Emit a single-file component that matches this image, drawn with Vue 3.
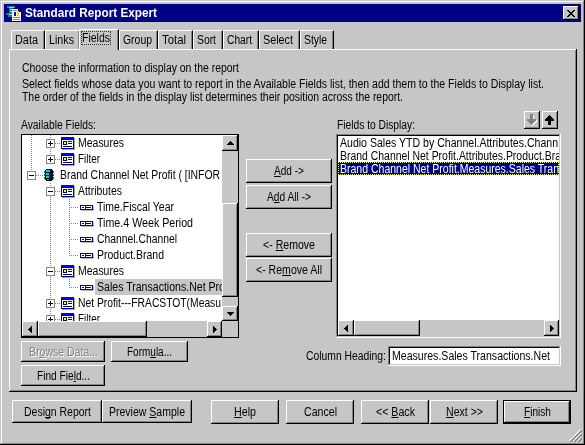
<script setup>
import { h, ref, onMounted, defineComponent } from 'vue'

// Text with an "&" access key marker, condensed to a given width.
const Caption = defineComponent({
  props: { text: String, width: Number },
  setup(props) {
    const el = ref(null)
    onMounted(() => {
      const natural = el.value.getBoundingClientRect().width
      el.value.style.transform = `scaleX(${props.width / natural})`
      el.value.style.marginRight = props.width - natural + 'px'
    })
    return () => {
      const i = props.text.indexOf('&')
      const body = i < 0
        ? props.text
        : [props.text.slice(0, i), h('u', props.text[i + 1]), props.text.slice(i + 2)]
      return h('span', { ref: el, class: 'caption' }, body)
    }
  }
})

const tabs = [
  { t: 'Data', w: 23, c: 'w34' },
  { t: 'Links', w: 25, c: 'w35' },
  { t: 'Fields', w: 28, c: 'active' },
  { t: 'Group', w: 29, c: 'w39' },
  { t: 'Total', w: 24, c: 'w35' },
  { t: 'Sort', w: 19, c: 'w30' },
  { t: 'Chart', w: 25, c: 'w36' },
  { t: 'Select', w: 30, c: 'w41' },
  { t: 'Style', w: 23, c: 'w34' }
]

// kind: folder | db | leaf ; lines: svg path of the dotted guides
const rows = [
  { kind: 'folder', t: 'Measures', w: 46, box: '+', lines: 'M9.5 0V16M28.5 0V16M33 8.5H39' },
  { kind: 'folder', t: 'Filter', w: 22, box: '+', lines: 'M9.5 0V16M28.5 0V8M33 8.5H39' },
  { kind: 'db', t: 'Brand Channel Net Profit ( [INFOR', w: 160, box: '-', lines: 'M9.5 0V8M14 8.5H21' },
  { kind: 'folder', t: 'Attributes', w: 44, box: '-', lines: 'M28.5 0V16M33 8.5H39' },
  { kind: 'leaf', t: 'Time.Fiscal Year', w: 77, lines: 'M28.5 0V16M47.5 0V16M47 8.5H57' },
  { kind: 'leaf', t: 'Time.4 Week Period', w: 96, lines: 'M28.5 0V16M47.5 0V16M47 8.5H57' },
  { kind: 'leaf', t: 'Channel.Channel', w: 80, lines: 'M28.5 0V16M47.5 0V16M47 8.5H57' },
  { kind: 'leaf', t: 'Product.Brand', w: 67, lines: 'M28.5 0V16M47.5 0V8M47 8.5H57' },
  { kind: 'folder', t: 'Measures', w: 46, box: '-', lines: 'M28.5 0V16M33 8.5H39' },
  { kind: 'leaf', t: 'Sales Transactions.Net Pro', w: 128, sel: true, lines: 'M28.5 0V16M47.5 0V8M47 8.5H57' },
  { kind: 'folder', t: 'Net Profit---FRACSTOT(Measu', w: 143, box: '+', lines: 'M28.5 0V16M33 8.5H39' },
  { kind: 'folder', t: 'Filter', w: 22, box: '+', lines: 'M28.5 0V16M33 8.5H39' }
]
const gutter = { folder: 54, db: 36, leaf: 73 }

const display = [
  { t: 'Audio Sales YTD by Channel.Attributes.Chann', w: 218 },
  { t: 'Brand Channel Net Profit.Attributes.Product.Bra', w: 221 },
  { t: 'Brand Channel Net Profit.Measures.Sales Tran', w: 219, sel: true }
]
</script>

<template>
  <div class="window">
    <header class="titlebar">
      <svg class="app-icon" width="16" height="17" shape-rendering="crispEdges">
        <path d="M1 1H9V3H7V8H11V12H2V10H0V8H3V3H1Z" fill="#008484" />
        <path d="M3 2H8M4 4H8M4 6H8M3 9H8" stroke="#8ce0e0" transform="translate(0 .5)" />
        <path d="M6 4H14L16 6V17H6Z" fill="#111" />
        <path d="M6 4H12V7H15V16H6Z" fill="#fff" />
        <path d="M8 7h2v4H8z" fill="#0000c6" />
        <path d="M11 6h2v5h-2z" fill="#e7df00" />
        <path d="M7 5.5H11M7 12.5H14M7 14.5H14" stroke="#848484" />
      </svg>
      <Caption class="title" text="Standard Report Expert" :width="132" />
      <button class="btn close" aria-label="Close">
        <svg width="8" height="7" shape-rendering="crispEdges">
          <path d="M0 0h2v1h1v1h2V1h1V0h2v1H7v1H6v1H5v1h1v1h1v1h1v1H6V6H5V5H3v1H2v1H0V6h1V5h1V4h1V3H2V2H1V1H0z" />
        </svg>
      </button>
    </header>

    <nav class="tabs">
      <div v-for="tab in tabs" :key="tab.t" class="tab" :class="tab.c">
        <span class="tab-label"><Caption :text="tab.t" :width="tab.w" /></span>
      </div>
    </nav>

    <main class="page">
      <p class="lead"><Caption text="Choose the information to display on the report" :width="217" /></p>
      <p><Caption text="Select fields whose data you want to report in the Available Fields list, then add them to the Fields to Display list." :width="522" /></p>
      <p><Caption text="The order of the fields in the display list determines their position across the report." :width="381" /></p>

      <div class="columns">
        <section class="available">
          <div class="heading"><Caption text="Available Fields:" :width="75" /></div>
          <div class="tree">
            <div class="rows">
              <div v-for="(r, i) in rows" :key="i" class="row">
                <svg :width="gutter[r.kind]" height="16" shape-rendering="crispEdges">
                  <path :d="r.lines" stroke="#848484" stroke-dasharray="1 1" fill="none" />
                  <g v-if="r.box" :transform="r.kind === 'db' ? 'translate(5 4)' : 'translate(24 4)'">
                    <rect x=".5" y=".5" width="8" height="8" fill="#fff" stroke="#848484" />
                    <path :d="r.box === '+' ? 'M2 4.5H7M4.5 2V7' : 'M2 4.5H7'" stroke="#000" />
                  </g>
                  <g v-if="r.kind === 'folder'" transform="translate(39 2)">
                    <path d="M1 1H14V13H1Z" fill="#a5a5a5" />
                    <path d="M0 0H13V12H0Z" fill="#000084" />
                    <path d="M0 0H13V2H0Z" fill="#0000ff" />
                    <path d="M1 3H12V11H1Z" fill="#fff" />
                    <path d="M2 4H6V8H2Z" fill="#000084" />
                    <path d="M3 5H5V7H3Z" fill="#ffff00" />
                    <path d="M7 4.5H11M7 6.5H11M2 9.5H11" stroke="#000084" />
                  </g>
                  <g v-else-if="r.kind === 'db'" transform="translate(22 2)">
                    <path d="M2 0H8V1H9V11H8V12H2V11H1V1H2Z" fill="#000" />
                    <path d="M2 1H6V3H2ZM2 4H5V6H2ZM2 7H5V9H2ZM3 10H5V11H3Z" fill="#00d6d6" />
                    <path d="M6 1H8V2H6ZM5 4H8V6H5ZM5 7H8V9H5ZM5 10H8V11H5Z" fill="#000084" />
                    <path d="M0 2H1V4H0ZM0 5H1V7H0ZM0 8H1V10H0ZM9 2H10V4H9ZM9 5H10V7H9ZM9 8H10V10H9Z" fill="#008484" />
                  </g>
                  <g v-else-if="r.kind === 'leaf'" transform="translate(58 6)">
                    <path d="M1 1H14V6H1Z" fill="#b5b5b5" />
                    <rect x=".5" y=".5" width="12" height="4" fill="#fff" stroke="#000094" />
                    <path d="M2 2.5H4M6 2.5H11M5.5 1V4" stroke="#000094" />
                  </g>
                </svg>
                <span class="label" :class="{ selected: r.sel }"><Caption :text="r.t" :width="r.w" /></span>
              </div>
            </div>
            <div class="vbar">
              <div class="btn arrow"><svg width="7" height="4" shape-rendering="crispEdges"><path d="M3 0h1v1h1v1h1v1h1v1H0V3h1V2h1V1h1z" /></svg></div>
              <div class="btn thumb"></div>
              <div class="btn arrow down"><svg width="7" height="4" shape-rendering="crispEdges"><path d="M0 0h7v1H6v1H5v1H4v1H3V3H2V2H1V1H0z" /></svg></div>
            </div>
            <div class="hbar">
              <div class="btn arrow"><svg width="4" height="7" shape-rendering="crispEdges"><path d="M3 0h1v7H3V6H2V5H1V4H0V3h1V2h1V1h1z" /></svg></div>
              <div class="btn thumb"></div>
              <div class="btn arrow right"><svg width="4" height="7" shape-rendering="crispEdges"><path d="M0 0h1v1h1v1h1v1h1v1H3v1H2v1H1v1H0z" /></svg></div>
            </div>
          </div>
          <div class="actions">
            <button class="btn b84 disabled"><Caption text="Br&owse Data..." :width="69" /></button>
            <button class="btn b77"><Caption text="Form&ula..." :width="45" /></button>
            <button class="btn b84"><Caption text="Find Fie&ld..." :width="53" /></button>
          </div>
        </section>

        <section class="transfer">
          <button class="btn"><Caption text="&Add ->" :width="30" /></button>
          <button class="btn"><Caption text="A&dd All ->" :width="44" /></button>
          <button class="btn remove"><Caption text="<- &Remove" :width="52" /></button>
          <button class="btn remove-all"><Caption text="<- Re&move All" :width="66" /></button>
        </section>

        <section class="chosen">
          <div class="chosen-head">
            <Caption text="Fields to Display:" :width="78" />
            <div class="movers">
              <button class="btn" aria-label="Down">
                <svg width="12" height="12" shape-rendering="crispEdges">
                  <path d="M5 1H8V6H11V8H10V9H9V10H8V11H7V12H6V11H5V6Z" fill="#fff" />
                  <path d="M4 0H7V5H10V7H9V8H8V9H7V10H6V11H5V10H4V9H3V8H2V7H1V5H4Z" fill="#848484" />
                </svg>
              </button>
              <button class="btn" aria-label="Up">
                <svg width="12" height="12" shape-rendering="crispEdges">
                  <path d="M5 1H6V2H7V3H8V4H9V5H10V7H7V11H4V7H1V5H2V4H3V3H4V2H5Z" fill="#000" />
                </svg>
              </button>
            </div>
          </div>
          <div class="list sunken">
            <div class="items">
              <div v-for="d in display" :key="d.t" class="item" :class="{ current: d.sel }">
                <Caption :text="d.t" :width="d.w" />
              </div>
            </div>
            <div class="hbar">
              <div class="btn arrow"><svg width="4" height="7" shape-rendering="crispEdges"><path d="M3 0h1v7H3V6H2V5H1V4H0V3h1V2h1V1h1z" /></svg></div>
              <div class="btn thumb"></div>
              <div class="btn arrow right"><svg width="4" height="7" shape-rendering="crispEdges"><path d="M0 0h1v1h1v1h1v1h1v1H3v1H2v1H1v1H0z" /></svg></div>
            </div>
          </div>
          <div class="column-heading">
            <Caption text="Column Heading:" :width="80" />
            <div class="field sunken"><Caption text="Measures.Sales Transactions.Net" :width="158" /></div>
          </div>
        </section>
      </div>
    </main>

    <footer class="footer">
      <button class="btn wide"><Caption text="Desi&gn Report" :width="67" /></button>
      <button class="btn wide"><Caption text="Preview &Sample" :width="76" /></button>
      <button class="btn help"><Caption text="&Help" :width="22" /></button>
      <button class="btn cancel"><Caption text="Cancel" :width="33" /></button>
      <button class="btn back"><Caption text="<< &Back" :width="39" /></button>
      <button class="btn next"><Caption text="&Next >>" :width="37" /></button>
      <button class="btn finish"><Caption text="&Finish" :width="27" /></button>
    </footer>
    <svg class="grip" width="13" height="13">
      <path d="M0 12L12 0M4 12L12 4M8 12L12 8" stroke="#fff" />
      <path d="M1 13L13 1M2 13L13 2M5 13L13 5M6 13L13 6M9 13L13 9M10 13L13 10" stroke="#848484" stroke-width=".9" />
    </svg>
  </div>
</template>

<style>
body {
  margin: 0;
  background: #c6c6c6;
}
</style>

<style scoped>
.window {
  position: relative;
  box-sizing: border-box;
  width: 585px;
  height: 445px;
  padding: 4px 3px 3px 4px;
  overflow: hidden;
  background: #c6c6c6;
  box-shadow: inset -1px -1px #000, inset 1px 1px #c6c6c6, inset -2px -2px #848484, inset 2px 2px #fff;
  color: #000;
  font: 12px/14px "Liberation Sans", Arial, sans-serif;
}
.caption {
  display: inline-block;
  flex: none;
  transform-origin: 0 50%;
  white-space: pre;
}
.caption :deep(u) {
  text-underline-offset: 1px;
  text-decoration-thickness: 1px;
  text-decoration-skip-ink: none;
}
.btn {
  display: flex;
  align-items: center;
  justify-content: center;
  box-sizing: border-box;
  flex: none;
  margin: 0;
  padding: 0;
  border: 0;
  background: #c6c6c6;
  box-shadow: inset -1px -1px #000, inset 1px 1px #fff, inset -2px -2px #848484;
  color: #000;
  font: inherit;
}
.sunken {
  box-sizing: border-box;
  padding: 2px;
  background: #fff;
  box-shadow: inset -1px -1px #fff, inset 1px 1px #848484, inset -2px -2px #c6c6c6, inset 2px 2px #000;
}
.titlebar {
  display: flex;
  align-items: center;
  width: 577px;
  height: 18px;
  background: #000084;
}
.app-icon {
  margin: 0 2px;
  flex: none;
}
.title {
  margin-left: 1px;
  color: #fff;
  font-weight: bold;
}
.close {
  width: 16px;
  height: 14px;
  margin: 0 2px 0 auto;
}
.tabs {
  display: flex;
  align-items: flex-end;
  height: 20px;
  margin: 7px 0 0 7px;
}
.tab {
  box-sizing: border-box;
  height: 19px;
  border-top: 1px solid #fff;
  border-left: 1px solid #fff;
  border-right: 1px solid #000;
  border-radius: 2px 1px 0 0;
  box-shadow: inset -1px 0 #848484;
  padding: 2px 0 0 3px;
}
.w34 { width: 34px; }
.w35 { width: 35px; }
.w39 { width: 39px; }
.w30 { width: 30px; }
.w36 { width: 36px; }
.w41 { width: 41px; }
.active {
  position: relative;
  z-index: 1;
  width: 40px;
  height: 21px;
  margin: 0 0 -1px -1px;
  padding: 1px 0 0 1px;
  background: #c6c6c6;
}
.tab-label {
  display: block;
  height: 14px;
}
.active .tab-label {
  box-sizing: border-box;
  width: 30px;
  padding-left: 1px;
  outline: 1px dotted #333;
  outline-offset: -1px;
}
.page {
  box-sizing: border-box;
  width: 568px;
  height: 343px;
  margin-left: 5px;
  padding: 12px 0 0 13px;
  box-shadow: inset -1px -1px #000, inset 1px 1px #fff, inset -2px -2px #848484;
}
.page p {
  height: 13px;
  margin: 0;
}
.page .lead {
  height: 16px;
}
.columns {
  display: flex;
  margin: 8px 0 0 -1px;
}
.available {
  width: 218px;
  margin-top: 7px;
}
.heading {
  height: 16px;
}
.tree {
  display: grid;
  box-sizing: border-box;
  grid-template: 186px 16px / 200px 16px;
  width: 218px;
  height: 204px;
  border: 1px solid #000;
  background: #c6c6c6;
}
.rows {
  overflow: hidden;
  background: #fff;
}
.row {
  display: flex;
  height: 16px;
}
.row svg {
  flex: none;
}
.label {
  flex: 1;
  min-width: 0;
  padding: 1px 0 1px 2px;
  height: 14px;
  overflow: hidden;
}
.label.selected {
  background: #c6c6c6;
}
.vbar {
  display: flex;
  flex-direction: column;
}
.hbar {
  display: flex;
  height: 16px;
  background: #c6c6c6;
}
.arrow {
  width: 16px;
  height: 16px;
}
.vbar .down {
  height: 15px;
  margin-top: auto;
}
.vbar .thumb {
  height: 94px;
  margin-top: 52px;
}
.hbar .right {
  width: 15px;
  margin-left: auto;
}
.hbar .thumb {
  width: 109px;
}
.actions {
  display: flex;
  flex-wrap: wrap;
  gap: 3px 6px;
  margin-top: 3px;
}
.actions .btn {
  height: 21px;
}
.b84 { width: 84px; }
.b77 { width: 77px; }
.disabled {
  color: #848484;
  text-shadow: 1px 1px #fff;
}
.transfer {
  display: flex;
  flex-direction: column;
  gap: 2px;
  width: 86px;
  margin: 48px 0 0 7px;
}
.transfer .btn {
  height: 24px;
}
.transfer .remove {
  margin-top: 22px;
}
.transfer .remove-all {
  margin-top: -1px;
}
.chosen {
  width: 225px;
  margin-left: 4px;
}
.chosen-head {
  display: flex;
  justify-content: space-between;
  align-items: flex-end;
  height: 21px;
  padding: 0 3px 2px 1px;
}
.movers {
  display: flex;
  gap: 2px;
  align-self: flex-start;
}
.movers .btn {
  width: 16px;
  height: 18px;
}
.list {
  height: 204px;
}
.items {
  height: 184px;
  overflow: hidden;
}
.item {
  height: 13px;
  padding-left: 2px;
  line-height: 15px;
}
.current {
  background: #000084;
  color: #fff;
  outline: 1px dotted #e7e78c;
  outline-offset: -1px;
}
.list .hbar .thumb {
  width: 66px;
}
.column-heading {
  display: flex;
  align-items: center;
  justify-content: flex-end;
  gap: 2px;
  height: 20px;
  margin: 8px 0 0 -32px;
}
.field {
  width: 173px;
  height: 20px;
  padding: 3px 0 0 4px;
}
.footer {
  display: flex;
  padding: 8px 0 0 8px;
}
.footer .btn {
  width: 68px;
  height: 24px;
}
.footer .wide {
  width: 90px;
  height: 23px;
}
.footer .help { margin-left: 19px; }
.cancel, .back { margin-left: 7px; }
.next { margin-left: 1px; }
.footer .finish {
  margin-left: 5px;
  box-shadow: inset 0 0 0 1px #000, inset -2px -2px #000, inset 2px 2px #fff, inset -3px -3px #848484;
}
.grip {
  position: absolute;
  right: 3px;
  bottom: 3px;
}
</style>
